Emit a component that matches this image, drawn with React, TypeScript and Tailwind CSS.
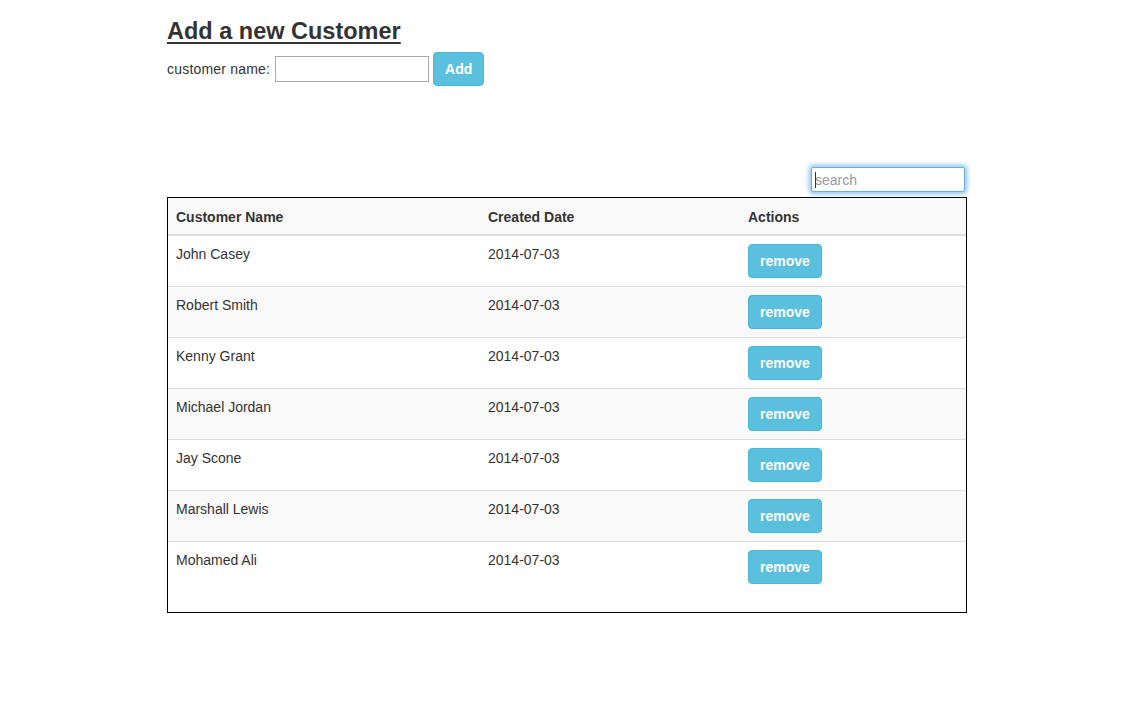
const customers = [
  { name: "John Casey", date: "2014-07-03" },
  { name: "Robert Smith", date: "2014-07-03" },
  { name: "Kenny Grant", date: "2014-07-03" },
  { name: "Michael Jordan", date: "2014-07-03" },
  { name: "Jay Scone", date: "2014-07-03" },
  { name: "Marshall Lewis", date: "2014-07-03" },
  { name: "Mohamed Ali", date: "2014-07-03" },
];

export default function App() {
  return (
    <div className="min-h-[715px] bg-white text-[14px] leading-[20px] text-[#333] font-['Liberation_Sans',Arial,sans-serif]">
      <div className="w-[800px] ml-[167px] pt-[17px]">
        {/* Add form */}
        <h2 className="text-[23.5px] leading-[28px] font-bold underline underline-offset-[3px] decoration-[1.5px]">
          Add a new Customer
        </h2>
        <div className="mt-[7px] flex items-center h-[34px]">
          <label className="mr-[5px] tracking-[0.2px]">customer name:</label>
          <input
            type="text"
            className="w-[154px] h-[26px] border border-[#aaa] outline-none px-1"
          />
          <button className="ml-[4px] h-[34px] w-[51px] rounded-[4px] border border-[#46b8da] bg-[#5bc0de] text-white font-bold">
            Add
          </button>
        </div>

        {/* Search */}
        <div className="mt-[81px] flex justify-end pr-[2px]">
          <div className="relative w-[154px] h-[25px] rounded-[2px] border border-[#66afe9] shadow-[0_0_5px_2px_rgba(102,175,233,0.75)] flex items-center">
            <span className="absolute left-[3px] top-[4px] h-[16px] w-px bg-[#333]" />
            <input
              type="text"
              placeholder="search"
              className="w-full h-full px-[3px] outline-none placeholder:text-[#999] bg-transparent"
            />
          </div>
        </div>

        {/* Table */}
        <div className="mt-[5px] border border-black">
          <table className="w-full mb-[20px] border-collapse">
            <thead>
              <tr className="bg-[#f9f9f9]">
                <th className="w-[312px] text-left font-bold pt-[9px] pb-[7px] px-[8px] border-b-2 border-[#ddd]">
                  Customer Name
                </th>
                <th className="w-[260px] text-left font-bold pt-[9px] pb-[7px] px-[8px] border-b-2 border-[#ddd]">
                  Created Date
                </th>
                <th className="text-left font-bold pt-[9px] pb-[7px] px-[8px] border-b-2 border-[#ddd]">
                  Actions
                </th>
              </tr>
            </thead>
            <tbody>
              {customers.map((c, i) => (
                <tr
                  key={i}
                  className={
                    (i % 2 === 1 ? "bg-[#f9f9f9] " : "bg-white ") +
                    (i > 0 ? "border-t border-[#ddd]" : "")
                  }
                >
                  <td className="p-[8px] align-top">{c.name}</td>
                  <td className="p-[8px] align-top">{c.date}</td>
                  <td className="p-[8px] align-top">
                    <button className="h-[34px] w-[74px] rounded-[4px] border border-[#46b8da] bg-[#5bc0de] text-white font-bold">
                      remove
                    </button>
                  </td>
                </tr>
              ))}
            </tbody>
          </table>
        </div>
      </div>
    </div>
  );
}
